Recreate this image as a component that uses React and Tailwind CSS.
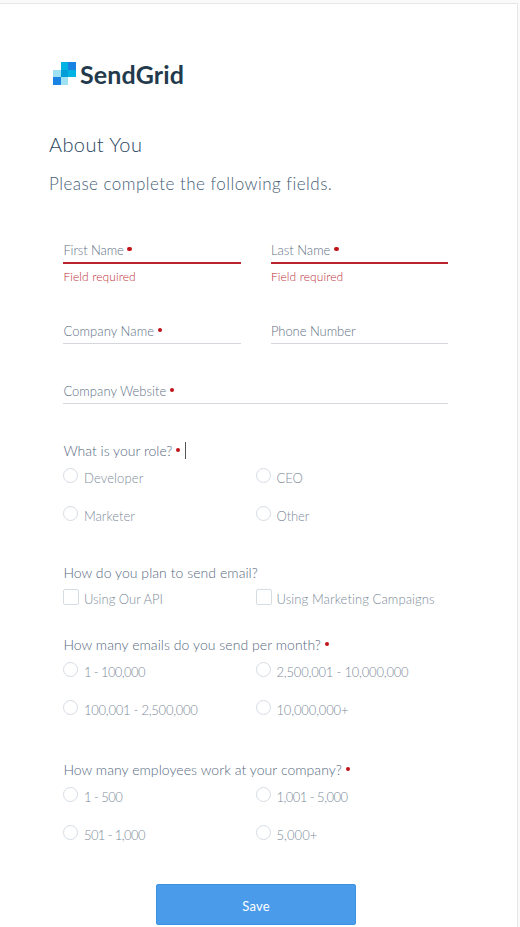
const Dot = ({ className = "" }) => (
  <span className={`block shrink-0 rounded-full bg-[#c0141b] ${className}`} />
);

function Field({ label, tracking, required, error }) {
  return (
    <div className="flex-1">
      <div className={`flex items-start text-[13px] leading-5 text-[#5f7286] ${error ? "h-[24px] border-b-2 border-[#b9252b]" : "h-[23px] border-b border-[#d4d8dd]"}`}>
        <span className={tracking}>{label}</span>
        {required && <Dot className="ml-[3.6px] mt-[6.5px] size-[4.5px]" />}
      </div>
      {error && <div className="mt-[3px] text-[12px] leading-5 tracking-[0.1px] text-[#bd2f37]">{error}</div>}
    </div>
  );
}

function Question({ text, tracking, required, caret, children, className }) {
  return (
    <section className={className}>
      <div className="flex h-5 items-start text-[14px] leading-5 text-[#566a7f]">
        <span className={tracking}>{text}</span>
        {required && <Dot className="ml-[4px] mt-[6.5px] size-[4px]" />}
        {caret && <span className="ml-[5px] mt-[1px] block h-[17px] w-px bg-[#555]" />}
      </div>
      <div className="mt-[7px] grid grid-cols-2">{children}</div>
    </section>
  );
}

function Option({ label, tracking, square }) {
  return (
    <div className="flex h-[38px] items-start">
      <span className={`block shrink-0 border border-[#d6dce4] ${square ? "-mt-px size-[16px] rounded-[2px]" : "mt-[0.4px] size-[15px] rounded-full"}`} />
      <span className={`whitespace-nowrap text-[13px] text-[#7d8b9a] ${square ? "ml-[4.6px] leading-[18px]" : "ml-[5.6px] leading-5"} ${tracking}`}>{label}</span>
    </div>
  );
}

const Logo = () => (
  <div className="ml-1 flex h-6 items-start">
    <svg width="23" height="23" viewBox="0 0 23 23">
      <path fill="#9de1f3" d="M0 8h8v7H0zM8 15h7v8H8z" />
      <path fill="#1a82e2" d="M0 15h8v8H0zM15 0h8v8h-8z" />
      <path fill="#00b3e3" d="M8 0h7v8H8zM15 8h8v7h-8z" />
      <path fill="#009dd9" d="M8 8h7v7H8z" />
    </svg>
    <span className="ml-[4px] text-[25px] font-bold leading-6 tracking-[0.15px] text-[#233a4d]">SendGrid</span>
  </div>
);

export default function App() {
  return (
    <div className="h-[927px] overflow-hidden bg-[#fafafa] pt-[3px] font-['Lato',sans-serif] font-light">
      <main className="h-[924px] w-[518px] border-r border-t border-[#e6e6e8] bg-white pl-[49px] pt-[58px]">
        <Logo />
        <h1 className="mt-[46px] text-[20px] leading-6 tracking-[0.4px] text-[#294661]">About You</h1>
        <p className="mt-[16px] text-[17px] leading-6 tracking-[0.46px] text-[#455d75]">Please complete the following fields.</p>
        <form className="ml-[14.4px] mt-[44px] w-[385px]">
          <div className="flex h-[81px] gap-[30px]">
            <Field label="First Name" tracking="tracking-[-0.1px]" required error="Field required" />
            <Field label="Last Name" tracking="tracking-[0px]" required error="Field required" />
          </div>
          <div className="flex h-[60px] gap-[30px]">
            <Field label="Company Name" tracking="tracking-[0.08px]" required />
            <Field label="Phone Number" tracking="tracking-[-0.05px]" />
          </div>
          <div className="flex h-[60px]">
            <Field label="Company Website" tracking="tracking-[0.03px]" required />
          </div>
          <Question className="h-[122px]" text="What is your role?" tracking="tracking-[0px]" required caret>
            <Option label="Developer" tracking="tracking-[0.13px]" />
            <Option label="CEO" tracking="tracking-[0px]" />
            <Option label="Marketer" tracking="tracking-[0px]" />
            <Option label="Other" tracking="tracking-[-0.1px]" />
          </Question>
          <Question className="h-[72px]" text="How do you plan to send email?" tracking="tracking-[0.05px]">
            <Option square label="Using Our API" tracking="tracking-[0px]" />
            <Option square label="Using Marketing Campaigns" tracking="tracking-[0.1px]" />
          </Question>
          <Question className="h-[125px]" text="How many emails do you send per month?" tracking="tracking-[0.05px]" required>
            <Option label="1 - 100,000" tracking="tracking-[-0.6px]" />
            <Option label="2,500,001 - 10,000,000" tracking="tracking-[-0.2px]" />
            <Option label="100,001 - 2,500,000" tracking="tracking-[-0.25px]" />
            <Option label="10,000,000+" tracking="tracking-[-0.15px]" />
          </Question>
          <Question className="h-[124px]" text="How many employees work at your company?" tracking="tracking-[0.05px]" required>
            <Option label="1 - 500" tracking="tracking-[-0.55px]" />
            <Option label="1,001 - 5,000" tracking="tracking-[-0.53px]" />
            <Option label="501 - 1,000" tracking="tracking-[-0.6px]" />
            <Option label="5,000+" tracking="tracking-[0.05px]" />
          </Question>
          <button type="button" className="ml-[92.6px] block h-[41px] w-[200px] rounded-[2px] border border-[#3c93e6] bg-[#4a9bea] pt-[5px] text-[13px] font-normal tracking-[0.2px] text-white">Save</button>
        </form>
      </main>
    </div>
  );
}
